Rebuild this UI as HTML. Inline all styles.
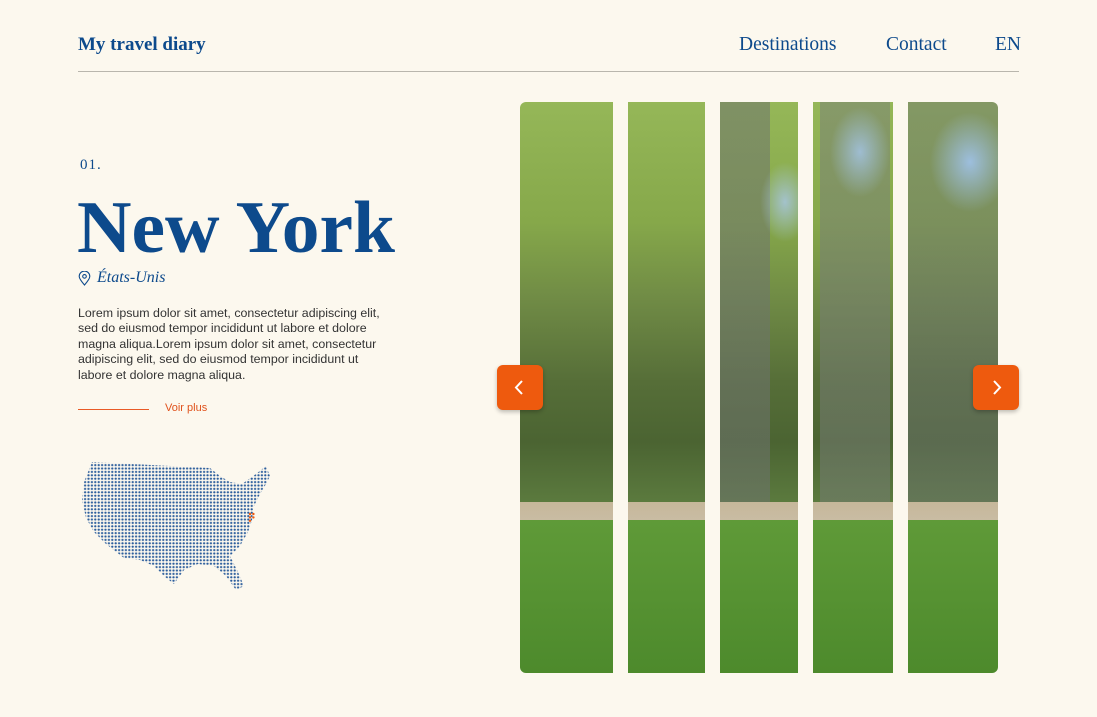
<!DOCTYPE html>
<html><head><meta charset="utf-8"><style>
*{margin:0;padding:0;box-sizing:border-box}
body{width:1097px;height:717px;background:#fcf8ee;position:relative;overflow:hidden;font-family:"Liberation Sans",sans-serif;color:#0d4a8c}
.logo{position:absolute;left:78px;top:34px;font:bold 19px "Liberation Serif",serif;color:#0d4a8c}
.nav{position:absolute;top:34px;font:19.5px "Liberation Serif",serif;color:#0d4a8c}
.line{position:absolute;left:78px;top:71px;width:941px;height:1px;background:#b9b6ad}
.num{position:absolute;left:80px;top:157px;font:15px "Liberation Serif",serif;letter-spacing:1px}
h1{position:absolute;left:77px;top:186px;font:bold 74px "Liberation Serif",serif;color:#0d4a8c;white-space:nowrap;transform:scaleX(1.02);transform-origin:left}
.loc{position:absolute;left:97px;top:269px;font:italic 16px "Liberation Serif",serif}
p{position:absolute;left:78px;top:306px;width:312px;font-size:12.4px;line-height:15.4px;color:#333}
.vl{position:absolute;left:78px;top:409px;width:71px;height:1px;background:#e95a26}
.vp{position:absolute;left:165px;top:402px;font-size:11px;color:#e0521c}
.photo{position:absolute;left:520px;top:102px;width:478px;height:571px;border-radius:6px;overflow:hidden;
background:
linear-gradient(to bottom,transparent 0,transparent 400px,#c6b79a 400px,#c9bca3 418px,#5f9a38 418px,#4d8a2c 571px),
radial-gradient(ellipse 40px 50px at 450px 60px,rgba(160,195,235,.9) 0,transparent 100%),
radial-gradient(ellipse 25px 40px at 265px 100px,rgba(170,200,235,.8) 0,transparent 100%),
radial-gradient(ellipse 30px 45px at 340px 50px,rgba(165,198,236,.8) 0,transparent 100%),
linear-gradient(to right,transparent 0,transparent 200px,rgba(110,115,110,.55) 200px,rgba(110,115,110,.55) 250px,transparent 250px,transparent 300px,rgba(120,125,120,.5) 300px,rgba(120,125,120,.5) 370px,transparent 370px,transparent 388px,rgba(110,115,115,.45) 388px),
linear-gradient(to bottom,#95b758 0,#86a84a 120px,#6f8a45 200px,#566e38 280px,#4b6432 340px,#5b7a3e 400px);}
.photo .mask{position:absolute;top:0;height:571px;background:#fcf8ee}
.btn{position:absolute;top:365px;width:46px;height:45px;background:#ee5a0e;border-radius:6px;box-shadow:0 2px 4px rgba(0,0,0,.25)}
.btn svg{position:absolute;left:15px;top:14px}
</style></head><body>
<div class="logo">My travel diary</div>
<div class="nav" style="left:739px">Destinations</div>
<div class="nav" style="left:886px">Contact</div>
<div class="nav" style="left:995px">EN</div>
<div class="line"></div>
<div class="num">01.</div>
<h1>New York</h1>
<svg style="position:absolute;left:78px;top:271px" width="13" height="15" viewBox="0 0 13 15"><path d="M6.5 14C3 10 1.2 7.5 1.2 5.4a5.3 5.3 0 0110.6 0C11.8 7.5 10 10 6.5 14z" fill="none" stroke="#0d4a8c" stroke-width="1.1"/><circle cx="6.5" cy="5.4" r="1.8" fill="none" stroke="#0d4a8c" stroke-width="1.1"/></svg>
<div class="loc">États-Unis</div>
<p>Lorem ipsum dolor sit amet, consectetur adipiscing elit, sed do eiusmod tempor incididunt ut labore et dolore magna aliqua.Lorem ipsum dolor sit amet, consectetur adipiscing elit, sed do eiusmod tempor incididunt ut labore et dolore magna aliqua.</p>
<div class="vl"></div><div class="vp">Voir plus</div>
<svg style="position:absolute;left:80px;top:460px" width="196" height="132" viewBox="0 0 196 132">
<defs><pattern id="d" width="3.4" height="3.4" patternUnits="userSpaceOnUse"><circle cx="1.7" cy="1.7" r="1.15" fill="#2b5d9c"/></pattern></defs>
<path d="M12 2 L130 8 L140 16 L150 22 L162 24 L176 14 L186 6 L190 16 L186 24 L180 34 L174 46 L172 60 L168 72 L160 86 L150 96 L158 112 L164 126 L156 130 L146 116 L134 106 L118 104 L104 110 L94 124 L84 116 L74 106 L60 100 L44 98 L26 84 L14 72 L6 58 L2 40 L4 22 Z" fill="url(#d)"/>
<g fill="#ee5a0e"><circle cx="170" cy="54" r="1.2"/><circle cx="173.4" cy="54" r="1.2"/><circle cx="170" cy="57.4" r="1.2"/><circle cx="173.4" cy="57.4" r="1.2"/><circle cx="170" cy="60.8" r="1.2"/></g>
</svg>
<div class="photo">
<div class="mask" style="left:93px;width:15px"></div>
<div class="mask" style="left:185px;width:15px"></div>
<div class="mask" style="left:278px;width:15px"></div>
<div class="mask" style="left:373px;width:15px"></div>
</div>
<div class="btn" style="left:497px"><svg width="16" height="17" viewBox="0 0 16 17"><path d="M10 2 L4 8.5 L10 15" fill="none" stroke="#fff" stroke-width="2"/></svg></div>
<div class="btn" style="left:973px"><svg width="16" height="17" viewBox="0 0 16 17"><path d="M6 2 L12 8.5 L6 15" fill="none" stroke="#fff" stroke-width="2"/></svg></div>
</body></html>
